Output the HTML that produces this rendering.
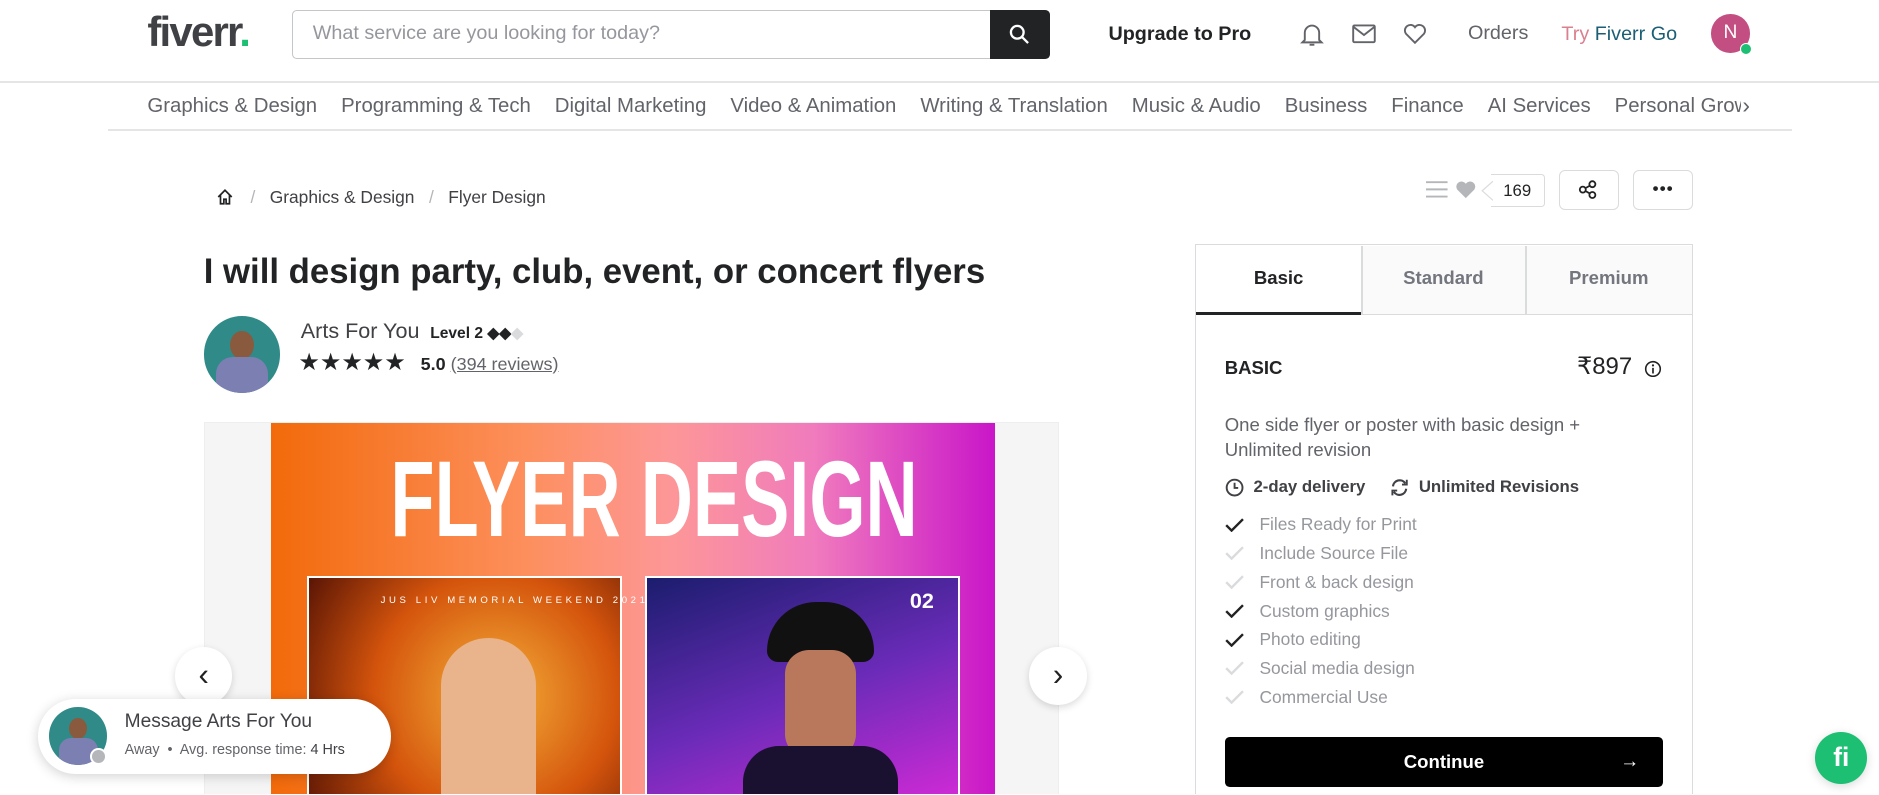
<!DOCTYPE html><html><head><meta charset="utf-8"><style>
*{margin:0;padding:0;box-sizing:border-box}
html,body{width:1879px;height:795px;overflow:hidden;background:#fff}
#r{zoom:1.19834;width:1568px;height:663px;position:relative;font-family:"Liberation Sans",sans-serif;color:#222325;overflow:hidden}
.a{position:absolute;white-space:nowrap}
.nav span{margin-right:20px}
.chk{display:flex;align-items:center;height:24px;color:#95979d;font-size:14.5px}
.chk svg{margin-right:13px}
</style></head><body><div id="r">
<div class="a" style="left:123px;top:7px;font-size:35px;font-weight:bold;letter-spacing:-1.5px;color:#404145">fiverr<span style="color:#1dbf73">.</span></div>
<div class="a" style="left:244px;top:8px;width:632px;height:41px;border:1px solid #c5c6c9;border-radius:4px"></div>
<div class="a" style="left:261px;top:18px;font-size:16.5px;color:#95979d">What service are you looking for today?</div>
<div class="a" style="left:826px;top:8px;width:50px;height:41px;background:#222325;border-radius:0 4px 4px 0"></div>
<svg class="a" style="left:842px;top:20px" width="17" height="17" viewBox="0 0 16 16"><circle cx="6.5" cy="6.5" r="5" fill="none" stroke="#fff" stroke-width="1.8"/><path d="M10.3 10.3L15 15" stroke="#fff" stroke-width="1.8"/></svg>
<div class="a" style="left:925px;top:19px;font-size:16.5px;font-weight:bold">Upgrade to Pro</div>
<svg class="a" style="left:1085px;top:18px" width="20" height="22" viewBox="0 0 20 22"><path d="M4 15V9a6 6 0 0112 0v6l2 2H2z" fill="none" stroke="#62646a" stroke-width="1.6"/><path d="M8 19h4" stroke="#62646a" stroke-width="1.6"/></svg>
<svg class="a" style="left:1128px;top:19px" width="20" height="18" viewBox="0 0 20 18"><rect x="1" y="2" width="18" height="14" rx="1" fill="none" stroke="#62646a" stroke-width="1.6"/><path d="M1 3l9 7 9-7" fill="none" stroke="#62646a" stroke-width="1.6"/></svg>
<svg class="a" style="left:1171px;top:19px" width="20" height="18" viewBox="0 0 20 18"><path d="M10 16.5L2.5 9A4.3 4.3 0 0110 3.5 4.3 4.3 0 0117.5 9z" fill="none" stroke="#62646a" stroke-width="1.6"/></svg>
<div class="a" style="left:1225px;top:18px;font-size:16.5px;color:#62646a">Orders</div>
<div class="a" style="left:1303px;top:19px;font-size:16.5px"><span style="color:#d9818f">Try </span><span style="color:#1b5e75">Fiverr Go</span></div>
<div class="a" style="left:1428px;top:12px;width:32px;height:32px;border-radius:50%;background:#c34f82;color:#fff;font-size:16px;text-align:center;line-height:32px">N</div>
<div class="a" style="left:1452px;top:36px;width:10px;height:10px;border-radius:50%;background:#1dbf73;border:1.5px solid #fff"></div>
<div class="a" style="left:0;top:68px;width:1568px;height:1px;background:#e4e5e7"></div>
<div class="a nav" style="left:123px;top:79px;font-size:17px;color:#62646a;width:1332px;overflow:hidden"><span>Graphics &amp; Design</span><span>Programming &amp; Tech</span><span>Digital Marketing</span><span>Video &amp; Animation</span><span>Writing &amp; Translation</span><span>Music &amp; Audio</span><span>Business</span><span>Finance</span><span>AI Services</span><span>Personal Growth</span></div>
<div class="a" style="left:1453px;top:77px;font-size:19px;color:#62646a;background:#fff;padding-left:1px">›</div>
<div class="a" style="left:90px;top:108px;width:1405px;height:1px;background:#e4e5e7"></div>
<svg class="a" style="left:180px;top:157px" width="15" height="15" viewBox="0 0 16 16"><path d="M2 8L8 2l6 6M4 6.5V14h3v-4h2v4h3V6.5" fill="none" stroke="#222325" stroke-width="1.5"/></svg>
<div class="a" style="left:209px;top:156px;font-size:14.5px;color:#404145"><span style="color:#b5b6ba">/</span>&nbsp;&nbsp; Graphics &amp; Design &nbsp;&nbsp;<span style="color:#b5b6ba">/</span>&nbsp;&nbsp; Flyer Design</div>
<div class="a" style="left:170px;top:211px;font-size:29px;font-weight:bold;color:#222325">I will design party, club, event, or concert flyers</div>
<div class="a" style="left:170px;top:264px;width:64px;height:64px;border-radius:50%;background:#2f8a88;overflow:hidden"><div style="position:absolute;left:22px;top:12px;width:20px;height:24px;border-radius:50%;background:#8a5a3e"></div><div style="position:absolute;left:10px;top:34px;width:44px;height:34px;border-radius:14px 14px 0 0;background:#7b7fb2"></div></div>
<div class="a" style="left:251px;top:265px;font-size:18px;color:#404145">Arts For You <span style="font-size:13px;font-weight:bold;color:#222325;margin-left:4px">Level 2 ◆◆<span style="color:#dadbdd">◆</span></span></div>
<div class="a" style="left:249px;top:290px;font-size:20px;color:#222325;letter-spacing:0px">★★★★★</div>
<div class="a" style="left:351px;top:295px;font-size:15px"><b>5.0</b> <span style="color:#62646a;text-decoration:underline">(394 reviews)</span></div>
<div class="a" style="left:170px;top:352px;width:714px;height:320px;background:#f5f5f5;border:1px solid #eee"></div>
<div class="a" style="left:226px;top:353px;width:604px;height:320px;background:linear-gradient(90deg,#f26a0a,#fd8f5c 35%,#fd9797 55%,#f07bbd 75%,#c916c9)"></div>
<div class="a" style="left:226px;top:371px;width:604px;text-align:center;font-weight:bold;font-size:90px;line-height:90px;color:#fff;transform:scaleX(.67)">FLYER DESIGN</div>
<div class="a" style="left:256px;top:481px;width:263px;height:200px;border:2px solid #fff;background:radial-gradient(circle at 60% 50%,#f5b23a,#d4540c 55%,#5a1505)"><div style="position:absolute;left:60px;top:14px;font-size:8px;color:#fff;letter-spacing:3px">JUS LIV MEMORIAL WEEKEND 2021</div><div style="position:absolute;left:110px;top:50px;width:80px;height:140px;background:#e9b48b;border-radius:40px 40px 0 0"></div></div>
<div class="a" style="left:538px;top:481px;width:263px;height:200px;border:2px solid #fff;background:linear-gradient(160deg,#1b1d6e,#6a2bb8 50%,#d92ad8)"><div style="position:absolute;right:20px;top:8px;font-size:18px;font-weight:bold;color:#fff">02</div><div style="position:absolute;left:100px;top:20px;width:90px;height:50px;background:#111;border-radius:45px 45px 10px 10px"></div><div style="position:absolute;left:115px;top:60px;width:60px;height:90px;background:#b9785c;border-radius:20px"></div><div style="position:absolute;left:80px;top:140px;width:130px;height:60px;background:#1a1030;border-radius:30px 30px 0 0"></div></div>
<div class="a" style="left:146px;top:540px;width:48px;height:48px;border-radius:50%;background:#fff;box-shadow:0 2px 6px rgba(0,0,0,.15);text-align:center;line-height:46px;font-size:26px;color:#222">‹</div>
<div class="a" style="left:859px;top:540px;width:48px;height:48px;border-radius:50%;background:#fff;box-shadow:0 2px 6px rgba(0,0,0,.15);text-align:center;line-height:46px;font-size:26px;color:#222">›</div>
<div class="a" style="left:32px;top:583px;width:294px;height:63px;border-radius:32px;background:#fff;box-shadow:0 2px 10px rgba(0,0,0,.18)"></div>
<div class="a" style="left:41px;top:590px;width:48px;height:48px;border-radius:50%;background:#2f8a88;overflow:hidden"><div style="position:absolute;left:17px;top:9px;width:15px;height:18px;border-radius:50%;background:#8a5a3e"></div><div style="position:absolute;left:8px;top:26px;width:33px;height:26px;border-radius:10px 10px 0 0;background:#7b7fb2"></div></div>
<div class="a" style="left:75px;top:624px;width:14px;height:14px;border-radius:50%;background:#b5b6ba;border:2px solid #fff"></div>
<div class="a" style="left:104px;top:593px;font-size:16px;color:#404145">Message Arts For You</div>
<div class="a" style="left:104px;top:619px;font-size:12px;color:#62646a">Away &nbsp;•&nbsp; Avg. response time: <b style="color:#404145;font-weight:normal">4 Hrs</b></div>
<svg class="a" style="left:1190px;top:151px" width="18" height="14" viewBox="0 0 18 14"><path d="M0 1h18M0 7h18M0 13h18" stroke="#b5b6ba" stroke-width="1.6"/></svg>
<svg class="a" style="left:1214px;top:150px" width="18" height="16" viewBox="0 0 20 18"><path d="M10 17L2 9A4.5 4.5 0 0110 3.5 4.5 4.5 0 0118 9z" fill="#b5b6ba"/></svg>
<svg class="a" style="left:1236px;top:150px" width="10" height="18" viewBox="0 0 10 18"><path d="M10 1L1 9l9 8" fill="#fff" stroke="#dadbdd"/></svg>
<div class="a" style="left:1244px;top:145px;width:45px;height:28px;border:1px solid #dadbdd;border-left:none;border-radius:0 3px 3px 0;font-size:14px;text-align:center;line-height:26px">169</div>
<div class="a" style="left:1301px;top:142px;width:50px;height:33px;border:1px solid #dadbdd;border-radius:5px"></div>
<svg class="a" style="left:1317px;top:150px" width="16" height="16" viewBox="0 0 16 16"><circle cx="4" cy="8" r="2.5" fill="none" stroke="#222" stroke-width="1.5"/><circle cx="12" cy="3.5" r="2.5" fill="none" stroke="#222" stroke-width="1.5"/><circle cx="12" cy="12.5" r="2.5" fill="none" stroke="#222" stroke-width="1.5"/><path d="M6.2 6.8l3.6-2M6.2 9.2l3.6 2" stroke="#222" stroke-width="1.5"/></svg>
<div class="a" style="left:1363px;top:142px;width:50px;height:33px;border:1px solid #dadbdd;border-radius:5px;text-align:center;font-size:14px;line-height:30px;letter-spacing:1px;font-weight:bold">•••</div>
<div class="a" style="left:997px;top:204px;width:416px;height:470px;border:1px solid #dadbdd"></div>
<div class="a" style="left:1136px;top:205px;width:276px;height:58px;background:#fafafa;border-bottom:1px solid #dadbdd"></div>
<div class="a" style="left:1273px;top:205px;width:1px;height:58px;background:#dadbdd"></div>
<div class="a" style="left:1136px;top:205px;width:1px;height:58px;background:#dadbdd"></div>
<div class="a" style="left:998px;top:260px;width:138px;height:3px;background:#222325"></div>
<div class="a" style="left:998px;top:223px;width:138px;text-align:center;font-size:15.5px;font-weight:bold">Basic</div>
<div class="a" style="left:1136px;top:223px;width:137px;text-align:center;font-size:15.5px;font-weight:bold;color:#74767e">Standard</div>
<div class="a" style="left:1273px;top:223px;width:139px;text-align:center;font-size:15.5px;font-weight:bold;color:#74767e">Premium</div>
<div class="a" style="left:1022px;top:298px;font-size:15.5px;font-weight:bold">BASIC</div>
<div class="a" style="left:1316px;top:294px;font-size:20px;color:#222325">₹897</div>
<svg class="a" style="left:1372px;top:300px" width="15" height="15" viewBox="0 0 16 16"><circle cx="8" cy="8" r="6.5" fill="none" stroke="#222" stroke-width="1.4"/><path d="M8 7v5" stroke="#222" stroke-width="1.5"/><circle cx="8" cy="4.8" r="1" fill="#222"/></svg>
<div class="a" style="left:1022px;top:344px;font-size:15.5px;line-height:21px;color:#62646a;white-space:normal;width:345px">One side flyer or poster with basic design + Unlimited revision</div>
<svg class="a" style="left:1022px;top:399px" width="16" height="16" viewBox="0 0 16 16"><circle cx="8" cy="8" r="6.6" fill="none" stroke="#404145" stroke-width="1.6"/><path d="M8 4v4.3h3" fill="none" stroke="#404145" stroke-width="1.6"/></svg>
<div class="a" style="left:1046px;top:398px;font-size:14px;font-weight:bold;color:#404145">2-day delivery</div>
<svg class="a" style="left:1160px;top:399px" width="16" height="16" viewBox="0 0 16 16"><path d="M2.5 7A5.6 5.6 0 0112.8 4.5M13.5 9A5.6 5.6 0 013.2 11.5" fill="none" stroke="#404145" stroke-width="1.8"/><path d="M14 1.5v4h-4M2 14.5v-4h4" fill="none" stroke="#404145" stroke-width="1.6"/></svg>
<div class="a" style="left:1184px;top:398px;font-size:14px;font-weight:bold;color:#404145">Unlimited Revisions</div>
<div class="a" style="left:1022px;top:426px">
<div class="chk"><svg width="16" height="12" viewBox="0 0 16 12"><path d="M1 6l4.5 4.5L15 1" fill="none" stroke="#222" stroke-width="2"/></svg>Files Ready for Print</div>
<div class="chk"><svg width="16" height="12" viewBox="0 0 16 12"><path d="M1 6l4.5 4.5L15 1" fill="none" stroke="#dadbdd" stroke-width="2"/></svg>Include Source File</div>
<div class="chk"><svg width="16" height="12" viewBox="0 0 16 12"><path d="M1 6l4.5 4.5L15 1" fill="none" stroke="#dadbdd" stroke-width="2"/></svg>Front &amp; back design</div>
<div class="chk"><svg width="16" height="12" viewBox="0 0 16 12"><path d="M1 6l4.5 4.5L15 1" fill="none" stroke="#222" stroke-width="2"/></svg>Custom graphics</div>
<div class="chk"><svg width="16" height="12" viewBox="0 0 16 12"><path d="M1 6l4.5 4.5L15 1" fill="none" stroke="#222" stroke-width="2"/></svg>Photo editing</div>
<div class="chk"><svg width="16" height="12" viewBox="0 0 16 12"><path d="M1 6l4.5 4.5L15 1" fill="none" stroke="#dadbdd" stroke-width="2"/></svg>Social media design</div>
<div class="chk"><svg width="16" height="12" viewBox="0 0 16 12"><path d="M1 6l4.5 4.5L15 1" fill="none" stroke="#dadbdd" stroke-width="2"/></svg>Commercial Use</div>
</div>
<div class="a" style="left:1022px;top:615px;width:366px;height:42px;background:#000;border-radius:4px;color:#fff;font-size:15.5px;font-weight:bold;text-align:center;line-height:42px">Continue<span style="position:absolute;right:20px;font-weight:normal;font-size:16px">→</span></div>
<div class="a" style="left:1515px;top:611px;width:43px;height:43px;border-radius:50%;background:#1dbf73;box-shadow:0 2px 8px rgba(0,0,0,.15);color:#fff;font-weight:bold;font-size:22px;text-align:center;line-height:42px">fi</div>
</div></body></html>
